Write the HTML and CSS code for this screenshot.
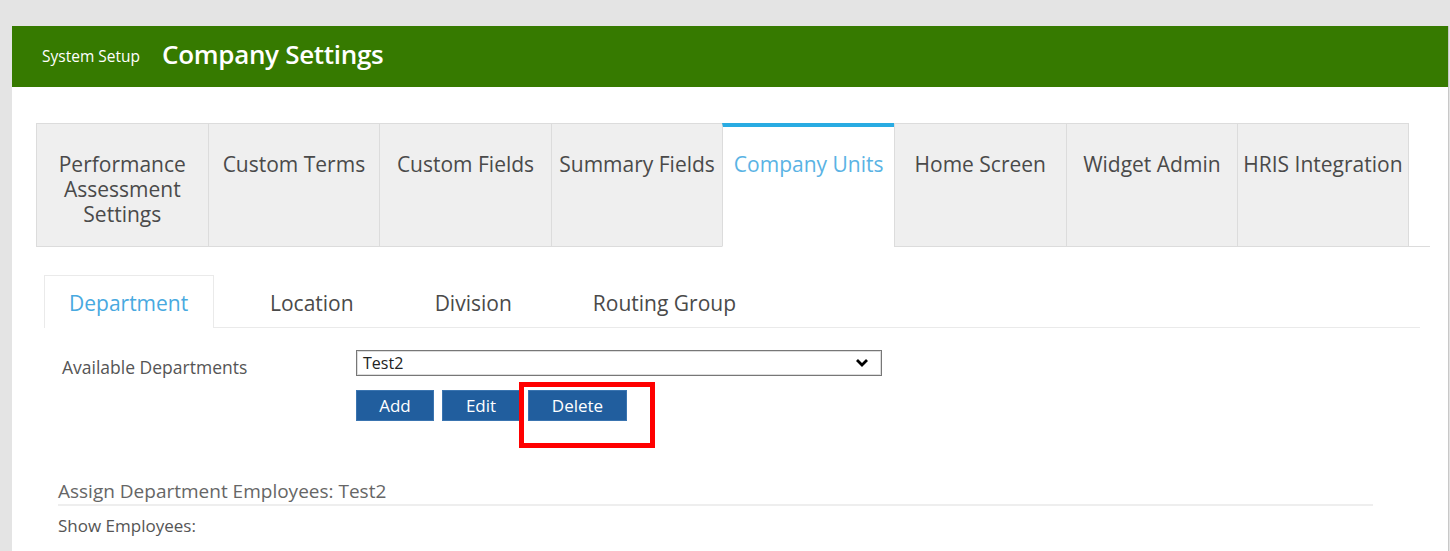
FILE: index.html
```html
<!DOCTYPE html>
<html lang="en">
<head>
    <meta charset="UTF-8">
    <meta name="viewport" content="width=device-width, initial-scale=1.0">
    <title>Company Settings</title>
    <link rel="stylesheet" href="styles.css">
</head>
<body>
    <div class="panel">
        <div class="header">
            <span class="crumb">System Setup</span>
            <span class="title">Company Settings</span>
        </div>

        <div class="content">
            <ul class="tabs">
                <li class="tab">Performance Assessment Settings</li>
                <li class="tab">Custom Terms</li>
                <li class="tab">Custom Fields</li>
                <li class="tab">Summary Fields</li>
                <li class="tab active">Company Units</li>
                <li class="tab">Home Screen</li>
                <li class="tab">Widget Admin</li>
                <li class="tab">HRIS Integration</li>
            </ul>

            <ul class="subtabs">
                <li class="subtab active">Department</li>
                <li class="subtab">Location</li>
                <li class="subtab">Division</li>
                <li class="subtab">Routing Group</li>
            </ul>

            <div class="form-row">
                <label class="label">Available Departments</label>
                <div class="field">
                    <div class="select">
                        <span>Test2</span>
                        <svg width="14" height="10" viewBox="0 0 14 10"><path d="M2 2 L7 7 L12 2" fill="none" stroke="#000" stroke-width="2.8"/></svg>
                    </div>
                    <div class="buttons">
                        <button class="btn">Add</button>
                        <button class="btn">Edit</button>
                        <button class="btn btn-delete">Delete<span class="mark"></span></button>
                    </div>
                </div>
            </div>

            <div class="assign">
                <h3>Assign Department Employees: Test2</h3>
                <p>Show Employees:</p>
            </div>
        </div>
    </div>
</body>
</html>
```

FILE: styles.css
```css
body {
    margin: 0;
    background-color: #e4e4e4;
    font-family: "Open Sans", "Liberation Sans", sans-serif;
    color: #4a4a4a;
}
.panel {
    margin: 26px 1px 0 12px;
    height: 525px;
    background-color: white;
    border-right: 1px solid #c8c8c8;
    overflow: hidden;
}
.header {
    box-sizing: border-box;
    height: 61px;
    background-color: #367a00;
    display: flex;
    align-items: center;
    padding: 0 0 6px 30px;
    color: white;
}
.crumb {
    font-size: 15.5px;
    margin-right: 22px;
    margin-top: 5px;
}
.title {
    font-size: 26px;
    font-weight: 600;
    letter-spacing: -0.3px;
}
.content {
    padding: 36px 0 0 24px;
}
.tabs {
    list-style: none;
    margin: 0;
    padding: 0;
    display: flex;
    width: 1394px;
    border-bottom: 1px solid #dcdcdc;
}
.tab {
    flex: 0 0 171.6px;
    box-sizing: border-box;
    height: 124px;
    margin-bottom: -1px;
    background-color: #efefef;
    border: 1px solid #dcdcdc;
    border-right: none;
    text-align: center;
    font-size: 21px;
    line-height: 25px;
    padding: 28px 2px 0;
    color: #4a4a4a;
}
.tab:nth-child(8) {
    border-right: 1px solid #dcdcdc;
}
.tab.active {
    background-color: white;
    border-top: 4px solid #29abe2;
    border-bottom-color: white;
    padding-top: 25px;
    color: #5ab3e4;
}
.subtabs {
    list-style: none;
    margin: 28px 0 0 8px;
    padding: 0;
    display: flex;
    gap: 31px;
    width: 1376px;
    border-bottom: 1px solid #eaeaea;
}
.subtab {
    height: 52px;
    line-height: 54px;
    padding: 0 24px;
    font-size: 21px;
    color: #4a4a4a;
    margin-bottom: -1px;
    border: 1px solid transparent;
    border-bottom: none;
}
.subtab.active {
    width: 120px;
    border-color: #eaeaea;
    background-color: white;
    color: #48a9e0;
}
.form-row {
    display: flex;
    padding: 22px 0 0 26px;
}
.label {
    width: 294px;
    font-size: 17.5px;
    padding-top: 5px;
    color: #555;
}
.select {
    box-sizing: border-box;
    width: 526px;
    height: 26px;
    border: 1px solid #777;
    box-shadow: inset 0 0 0 1px #ddd;
    display: flex;
    align-items: center;
    justify-content: space-between;
    padding: 0 12px 0 6px;
    font-size: 16px;
    color: #222;
}
.buttons {
    display: flex;
    gap: 8px;
    margin-top: 14px;
}
.btn {
    position: relative;
    width: 78px;
    height: 31px;
    background-color: #215e9e;
    border: 1px solid #3a74b0;
    color: white;
    font-family: "Open Sans", "Liberation Sans", sans-serif;
    font-size: 17px;
    padding: 0;
}
.btn-delete {
    width: 99px;
}
.mark {
    position: absolute;
    left: -10px;
    top: -9px;
    width: 126px;
    height: 56px;
    border: 5px solid #f00;
}
.assign {
    margin: 58px 0 0 22px;
    width: 1315px;
}
.assign h3 {
    margin: 0;
    font-size: 19px;
    font-weight: normal;
    color: #666;
    line-height: 25px;
    padding-bottom: 0;
    border-bottom: 2px solid #eee;
}
.assign p {
    margin: 8px 0 0;
    font-size: 17px;
    color: #555;
}
```
